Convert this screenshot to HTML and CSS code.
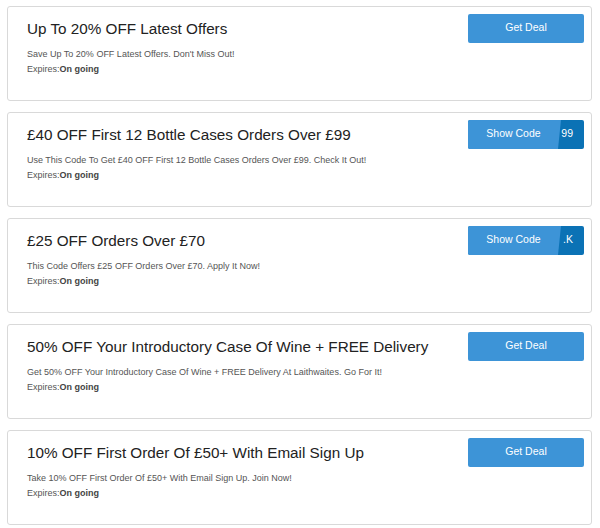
FILE: index.html
```html
<!DOCTYPE html>
<html>
<head>
	<title>Offers</title>
	<link rel="stylesheet" href="styles.css">
</head>
<body>
	<div class="offer-list">
		<div class="offer">
			<div class="offer-info">
				<h2>Up To 20% OFF Latest Offers</h2>
				<p class="desc">Save Up To 20% OFF Latest Offers. Don't Miss Out!</p>
				<p class="expires">Expires:<b>On going</b></p>
			</div>
			<button class="deal-btn">Get Deal</button>
		</div>
		<div class="offer">
			<div class="offer-info">
				<h2>£40 OFF First 12 Bottle Cases Orders Over £99</h2>
				<p class="desc">Use This Code To Get £40 OFF First 12 Bottle Cases Orders Over £99. Check It Out!</p>
				<p class="expires">Expires:<b>On going</b></p>
			</div>
			<button class="code-btn"><span class="code-cover">Show Code</span><span class="code">99</span></button>
		</div>
		<div class="offer">
			<div class="offer-info">
				<h2>£25 OFF Orders Over £70</h2>
				<p class="desc">This Code Offers £25 OFF Orders Over £70. Apply It Now!</p>
				<p class="expires">Expires:<b>On going</b></p>
			</div>
			<button class="code-btn"><span class="code-cover">Show Code</span><span class="code">.K</span></button>
		</div>
		<div class="offer">
			<div class="offer-info">
				<h2>50% OFF Your Introductory Case Of Wine + FREE Delivery</h2>
				<p class="desc">Get 50% OFF Your Introductory Case Of Wine + FREE Delivery At Laithwaites. Go For It!</p>
				<p class="expires">Expires:<b>On going</b></p>
			</div>
			<button class="deal-btn">Get Deal</button>
		</div>
		<div class="offer">
			<div class="offer-info">
				<h2>10% OFF First Order Of £50+ With Email Sign Up</h2>
				<p class="desc">Take 10% OFF First Order Of £50+ With Email Sign Up. Join Now!</p>
				<p class="expires">Expires:<b>On going</b></p>
			</div>
			<button class="deal-btn">Get Deal</button>
		</div>
	</div>
</body>
</html>
```

FILE: styles.css
```css
body {
	margin: 6px 8px 0 7px;
	background: #fff;
	font-family: "Liberation Sans", Arial, sans-serif;
}

.offer-list {
	display: flex;
	flex-direction: column;
	gap: 11px;
}

.offer {
	display: flex;
	justify-content: space-between;
	align-items: flex-start;
	height: 95px;
	box-sizing: border-box;
	padding: 7px 7px 0 19px;
	border: 1px solid #d9d9d9;
	border-radius: 3px;
}

.offer-info {
	padding-top: 6px;
}

.offer-info h2 {
	margin: 0;
	font-size: 15.25px;
	font-weight: normal;
	line-height: 17px;
	color: #222;
}

.desc {
	margin: 10px 0 0;
	font-size: 9px;
	line-height: 14px;
	color: #555;
}

.expires {
	margin: 1px 0 0;
	font-size: 9px;
	line-height: 14px;
	color: #555;
}

.expires b {
	color: #444;
}

.deal-btn,
.code-btn {
	flex: none;
	width: 116px;
	height: 29px;
	padding: 0;
	border: none;
	border-radius: 2px;
	font-family: inherit;
	font-size: 10.5px;
	color: #fff;
	cursor: pointer;
}

.deal-btn {
	background: #3d94d7;
	padding-bottom: 3px;
}

.code-btn {
	display: flex;
	align-items: stretch;
	background: #0b72b5;
}

.code-cover {
	flex: none;
	width: 93px;
	padding: 0 2px 3px 0;
	box-sizing: border-box;
	display: flex;
	align-items: center;
	justify-content: center;
	background: #3d94d7;
	border-radius: 2px 0 0 2px;
	clip-path: polygon(0 0, 93px 0, 90px 100%, 0 100%);
}

.code {
	flex: 1;
	display: flex;
	align-items: center;
	justify-content: flex-end;
	padding: 0 11px 3px 0;
	white-space: nowrap;
}
```
